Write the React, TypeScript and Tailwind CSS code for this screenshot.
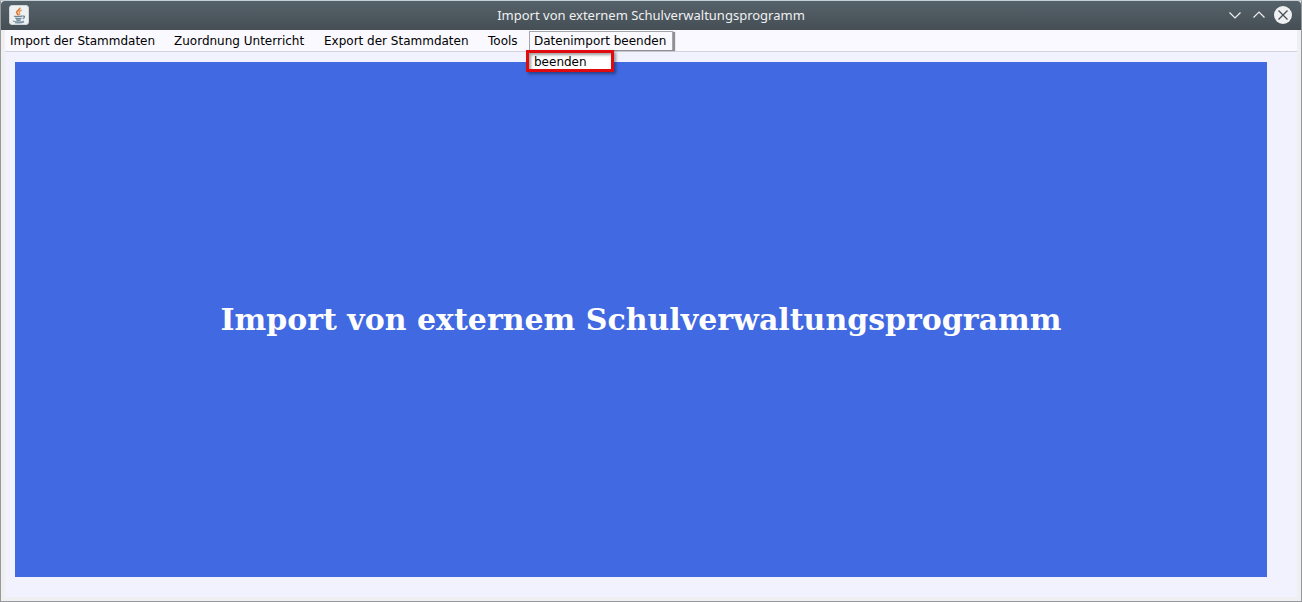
import clsx from 'clsx';

const title = 'Import von externem Schulverwaltungsprogramm';

const menus = [
  { label: 'Import der Stammdaten', width: 'w-[158px]' },
  { label: 'Zuordnung Unterricht', width: 'w-36' },
  { label: 'Export der Stammdaten', width: 'w-[158px]' },
  { label: 'Tools', width: 'w-10' },
  { label: 'Datenimport beenden', width: 'w-36', items: ['beenden'] },
];

const JavaIcon = () => (
  <svg viewBox="0 0 20 20" className="h-5 w-5" fill="none" aria-hidden="true">
    <rect x="0.5" y="0.5" width="19" height="19" rx="2.5" fill="#eef1f2" stroke="#cfd5d8" />
    <path d="M10.8 2.6c1 2-3.5 3-3.2 5 .2 1 1.4 1.6 1.8 2.8" stroke="#e07b35" strokeWidth="1.7" />
    <path d="M12.8 5.2c-2.4.9-3 1.8-2.4 2.8.5.8.4 1.4-.3 2" stroke="#e8975c" strokeWidth="1.4" />
    <path d="M5.6 10.9c-1.2.9 6.2.9 7.8 0M6.2 13c1.4.7 4.8.7 6.4 0M7 14.7c1.2.6 3.6.6 4.8 0" stroke="#6b8798" strokeWidth="1.3" />
    <path d="M13.4 11.2c2.8-.8 2.8 1.6.2 2.6" stroke="#6b8798" strokeWidth="1.2" />
    <path d="M4.6 15.6c-2 1.7 8.6 1.7 10.4.2M6 17.7c3 .4 7.2.3 9-.7" stroke="#7d96a5" strokeWidth="1.1" />
  </svg>
);

const TitleBar = () => (
  <header className="grid h-[29px] grid-cols-[1fr_auto_1fr] items-center rounded-t-sm bg-linear-to-b from-[#56626a] to-[#454e55] px-2 pb-px">
    <JavaIcon />
    <h1 className="font-['Noto_Sans',sans-serif] text-[13px] leading-5 text-[#eff0f1]">{title}</h1>
    <div className="flex items-center justify-end gap-1">
      <button type="button" aria-label="Minimieren" className="h-5 w-5">
        <svg viewBox="0 0 20 20" fill="none" stroke="#eff0f1" strokeWidth="1.2">
          <path d="M4.5 7.5l5.5 5.5l5.5-5.5" />
        </svg>
      </button>
      <button type="button" aria-label="Maximieren" className="h-5 w-5">
        <svg viewBox="0 0 20 20" fill="none" stroke="#eff0f1" strokeWidth="1.2">
          <path d="M4.5 12.5l5.5-5.5l5.5 5.5" />
        </svg>
      </button>
      <button type="button" aria-label="Schließen" className="h-5 w-5">
        <svg viewBox="0 0 20 20" fill="none">
          <circle cx="10" cy="10" r="9" fill="#eff0f1" />
          <path d="M5.5 5.5l9 9M14.5 5.5l-9 9" stroke="#475057" strokeWidth="1.3" />
        </svg>
      </button>
    </div>
  </header>
);

const MenuBar = () => (
  <nav className="flex h-[22px] items-end gap-[6px] border-b border-[#d2d2de] bg-[#faf9ff] pb-px">
    {menus.map(({ label, width, items }) => (
      <div key={label} className={clsx('relative', width)}>
        <button
          type="button"
          className={clsx(
            'block h-[19px] w-full border border-b-0 px-1 text-left text-xs leading-[18px] whitespace-nowrap',
            items ? 'border-[#a5a5b0] shadow-[2px_1px_1px_#909090]' : 'border-transparent',
          )}
        >
          {label}
        </button>
        {items && (
          <ul className="absolute top-full -left-[3px] w-[88px] border-3 border-[#e00b0f] bg-white shadow-[2px_2px_3px_#00000066,inset_2px_2px_3px_#00000060]">
            {items.map((item) => (
              <li key={item}>
                <button type="button" className="block h-4 w-full px-[5px] text-left text-xs leading-[18px]">
                  {item}
                </button>
              </li>
            ))}
          </ul>
        )}
      </div>
    ))}
  </nav>
);

export default function App() {
  return (
    <div className="flex min-h-screen flex-col border border-t-[#c5ced4] border-r-[#96999b] border-b-[#96999b] border-l-[#96999b] bg-[#efeff1] font-['DejaVu_Sans',sans-serif] text-black">
      <TitleBar />
      <div className="mx-1 mb-1 flex grow flex-col bg-[#f2f2ff]">
        <MenuBar />
        <main className="flex grow pt-[10px] pr-[30px] pb-5 pl-[10px]">
          <section className="flex grow items-center justify-center bg-[#4169e1]">
            <h2 className="font-['DejaVu_Serif',serif] text-[30px] leading-9 font-bold text-white">{title}</h2>
          </section>
        </main>
      </div>
    </div>
  );
}
